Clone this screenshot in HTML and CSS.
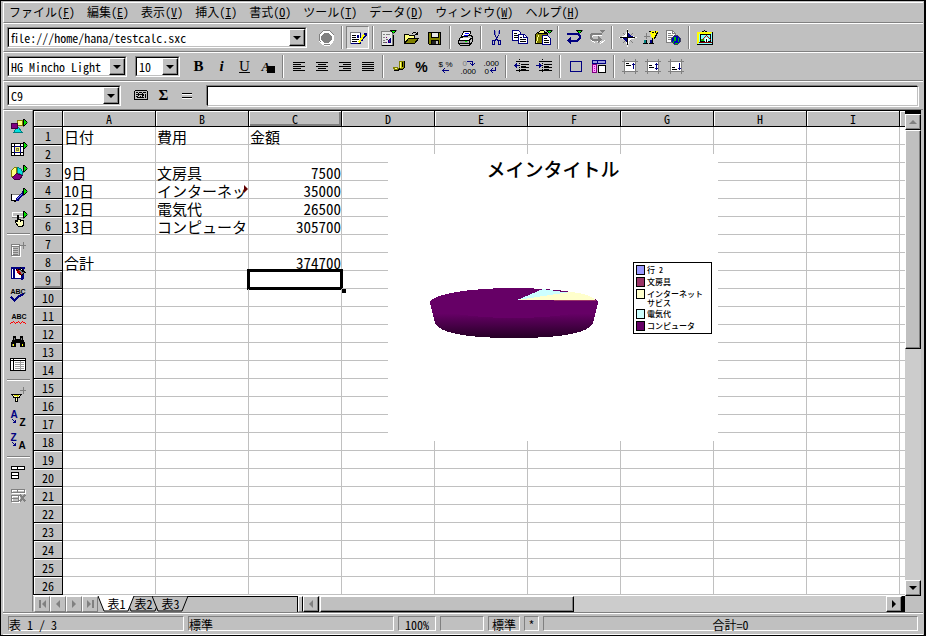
FILE: index.html
```html
<!DOCTYPE html>
<html lang="ja">
<head>
    <meta charset="UTF-8">
    <meta name="viewport" content="width=device-width, initial-scale=1.0">
    <title>testcalc.sxc</title>
    <link rel="stylesheet" href="styles.css">
</head>
<body>
    <svg class="defs" aria-hidden="true">
        <symbol id="flyout" viewBox="0 0 5 8"><path d="M0 0H1L5 4L1 8H0z" fill="#000" stroke="none"/><path d="M1 1L4 4L1 7z" fill="#0d0" stroke="none"/></symbol>
        <symbol id="dropdown" viewBox="0 0 7 4"><path d="M0 0H7V1L4 4H3L0 1z" fill="#000" stroke="none"/><path d="M1 1H6L4 3H3z" fill="#0e0" stroke="none"/></symbol>
    </svg>

    <div class="window">
        <nav class="menubar">
            <a href="#">ファイル(<u>F</u>)</a>
            <a href="#">編集(<u>E</u>)</a>
            <a href="#">表示(<u>V</u>)</a>
            <a href="#">挿入(<u>I</u>)</a>
            <a href="#">書式(<u>O</u>)</a>
            <a href="#">ツール(<u>T</u>)</a>
            <a href="#">データ(<u>D</u>)</a>
            <a href="#">ウィンドウ(<u>W</u>)</a>
            <a href="#">ヘルプ(<u>H</u>)</a>
        </nav>

        <!-- function bar -->
        <div class="toolbar">
            <div class="combo combo-url">
                <select aria-label="URL"><option>file:///home/hana/testcalc.sxc</option></select>
                <span class="combo-arrow"></span>
            </div>
            <div class="tools">
                <button class="tool" aria-label="Stop"><svg class="icon" viewBox="-.5 -.5 18 18"><path d="M5 1H11L15 5V11L11 15H5L1 11V5z" fill="#fff" stroke="#808080"/><path d="M15 6V11L11 16H6L1 12" stroke="#fff"/><path d="M6 4H10L13 7V10L10 13H6L3 10V7z" fill="#808080" stroke="#808080"/></svg></button>
                <span class="sep"></span>
                <button class="tool pressed" aria-label="Edit file"><svg class="icon" viewBox="-.5 -.5 18 18"><path d="M1 3H11V14H1z" fill="#fff" stroke="#000080"/><path d="M1 14V3H11" stroke="#808080"/><path d="M3 6H6M3 8H6M3 10H9M3 12H7"/><path d="M8 6H9V8H8z" fill="#000080" stroke="#000080"/><path d="M16 5L12 10" stroke="#000080" stroke-width="3"/><path d="M14 6L10 12" stroke="#ff0" stroke-width="2"/><path d="M9 14H10"/></svg></button>
                <span class="sep"></span>
                <button class="tool" aria-label="New"><svg class="icon" viewBox="-.5 -.5 18 18"><path d="M1 2H12V16H1z" fill="#e8e8e8" stroke="#808080"/><path d="M2 16H13V6"/><path d="M3 5H4M3 8H4M3 11H4M6 5H9" stroke="#808080"/><path d="M6 8H6M6 13H6" stroke="#800080"/><path d="M10 9V13H8V11z" fill="#800080" stroke="#000080"/><path d="M3 13H5M6 10H7" stroke="#606060"/><use href="#dropdown" x="9" y="0" width="7" height="4"/></svg></button>
                <button class="tool" aria-label="Open"><svg class="icon" viewBox="-.5 -.5 18 18"><path d="M1 14V5H5L6 6H11V9" fill="#ffff80"/><path d="M1 14L5 9H15L11 14z" fill="#808000"/><path d="M9 4L10 3H12L14 5M14 3V5H12"/></svg></button>
                <button class="tool" aria-label="Save"><svg class="icon" viewBox="-.5 -.5 18 18"><path d="M2 3H14V15H3L2 14z" fill="#808000"/><path d="M5 3H12V8H5z" fill="#e8e8e8"/><path d="M5 11H12V15H5z" fill="#202020"/><path d="M10 12H11V14H10z" fill="#c0c0c0" stroke="#c0c0c0"/></svg></button>
                <span class="sep"></span>
                <button class="tool" aria-label="Print"><svg class="icon" viewBox="-.5 -.5 18 18"><path d="M4 7L6 2H13L12 7z" fill="#fff"/><path d="M8 4H11M7 6H10" stroke="#00f"/><path d="M3 8L1 11V14L3 16H12L15 12V7L13 6z" fill="#c0c0c0"/><path d="M4 9H12L11 10H3z" fill="#fff" stroke="#fff"/><path d="M1 11H11L15 8M2 14H12M12 11V15"/><path d="M3 12H10M3 13H10" stroke="#a0a0a0"/><path d="M8 12H9" stroke="#0f0"/></svg></button>
                <span class="sep"></span>
                <button class="tool" aria-label="Cut"><svg class="icon" viewBox="-.5 -.5 18 18"><path d="M6 1V4L8 9M11 1V4L8 9" stroke="#000080"/><path d="M7 2V5M10 2V5" stroke="#8080c0"/><path d="M4 11H6V15H4zM10 11H12V15H10z" stroke="#000080"/><path d="M8 9L7 11M8 9L9 11" stroke="#000080"/></svg></button>
                <button class="tool" aria-label="Copy"><svg class="icon" viewBox="-.5 -.5 18 18"><path d="M1 1H7L9 3V11H1z" fill="#fff" stroke="#000080"/><path d="M3 4H5M3 6H7M3 8H7"/><path d="M7 5H13L16 8V14H7z" fill="#fff" stroke="#000080"/><path d="M12 5V8H16" stroke="#000080"/><path d="M9 8H10M9 10H14M9 12H14"/></svg></button>
                <button class="tool" aria-label="Paste"><svg class="icon" viewBox="-.5 -.5 18 18"><path d="M1 5L3 3H12L13 5V14H1z" fill="#808000"/><path d="M4 3L6 1H9L11 4H4z" fill="#ffff80"/><path d="M2 13L4 6" stroke="#ffff80"/><path d="M8 6H13L16 9V15H8z" fill="#fff" stroke="#000080"/><path d="M10 9H12M10 11H14M10 13H14"/><use href="#dropdown" x="11" y="0" width="7" height="4"/></svg></button>
                <span class="sep"></span>
                <button class="tool" aria-label="Undo"><svg class="icon" viewBox="-.5 -.5 18 18"><path d="M2 4H12L14 6V9L12 11H4" stroke="#000080" stroke-width="2"/><path d="M5 8L2 11L5 14z" fill="#000080" stroke="#000080"/><use href="#dropdown" x="10" y="0" width="7" height="4"/></svg></button>
                <button class="tool" aria-label="Redo" disabled><svg class="icon" viewBox="-.5 -.5 18 18"><path d="M13 6H5L3 8V11L6 13M9 12H12M12 14L16 11" stroke="#fff"/><path d="M12 4H4L2 6V8L4 10H9" stroke="#808080" stroke-width="2"/><path d="M10 7L13 10L10 13z" fill="#808080" stroke="#808080"/><path d="M10 0H17L14 4z" fill="#808080" stroke="none"/></svg></button>
                <span class="sep"></span>
                <button class="tool" aria-label="Navigator"><svg class="icon" viewBox="-.5 -.5 18 18"><path d="M4 4L6 6M13 4L11 6M4 13L6 11M13 13L11 11" stroke="#808080"/><path d="M8 1L10 6L16 8L10 10L8 16L6 10L1 8L6 6z" fill="#fff" stroke="#fff"/><path d="M8 1V15M1 8H15"/><path d="M9 4V7H13L10 6zM7 12V9H4L6 10z" fill="#000080" stroke="#000080"/></svg></button>
                <button class="tool" aria-label="Stylist"><svg class="icon" viewBox="-.5 -.5 18 18"><path d="M4 4V9M2 7H7" stroke="#808080"/><path d="M7 2H15L15 4L12 6V9H10L9 5z" fill="#ffff00" stroke="#ffff00"/><path d="M7 2H8M10 3H11M15 3L12 9M13 2V3M10 9V10"/><path d="M2 11H4V14H2z" fill="#008080" stroke="#008080"/><path d="M8 11H10V14H8z" fill="#000080" stroke="#000080"/><path d="M1 14H5M7 14H11M4 11V14M10 11V14"/></svg></button>
                <button class="tool" aria-label="Hyperlink"><svg class="icon" viewBox="-.5 -.5 18 18"><path d="M1 1H7L10 4V13H1z" fill="#fff" stroke="#808080"/><path d="M3 4H5M3 6H7M3 8H7M3 10H5M7 1V4H10" stroke="#808080"/><path d="M9 6H12L15 9V12L12 15H9L6 12V9z" fill="#0000c0" stroke="#404060"/><path d="M9 8H10V11H9zM13 9V12M10 14H12M8 12V13" fill="#00c000" stroke="#00c000"/></svg></button>
                <span class="sep"></span>
                <button class="tool" aria-label="Gallery"><svg class="icon" viewBox="-.5 -.5 18 18"><path d="M5 3L8 1L11 3"/><path d="M1 3H16V15H1z" fill="#80ffff" stroke="#808000"/><path d="M1 3H15M1 3V14M2 4H14M2 4V13" stroke="#ffff00"/><path d="M16 3V15H1M4 5H14V12H4z"/><path d="M3 13H15" stroke="#800000"/><path d="M5 10H7V11H5z" fill="#0c0" stroke="#0c0"/><path d="M9 9H11V12H9z" fill="#fff" stroke="#fff"/><path d="M6 10L10 6L14 10" stroke="#c00000"/><path d="M10 10V12"/></svg></button>
            </div>
        </div>

        <!-- object bar -->
        <div class="toolbar">
            <div class="combo combo-font">
                <select aria-label="Font"><option>HG Mincho Light</option></select>
                <span class="combo-arrow"></span>
            </div>
            <div class="combo combo-size">
                <select aria-label="Size"><option>10</option></select>
                <span class="combo-arrow"></span>
            </div>
            <div class="tools">
                <button class="tool glyph"><b>B</b></button>
                <button class="tool glyph"><i>i</i></button>
                <button class="tool glyph"><u>U</u></button>
                <button class="tool" aria-label="Font colour"><svg class="icon" viewBox="-.5 -.5 18 18"><text class="t-serif" x="2" y="12">A</text><path d="M8 8H15V14H8z" fill="#000"/></svg></button>
                <span class="sep"></span>
                <button class="tool" aria-label="Left"><svg class="icon" viewBox="-.5 -.5 18 18"><path d="M3 4H14M3 6H10M3 8H14M3 10H10M3 12H14"/></svg></button>
                <button class="tool" aria-label="Centre"><svg class="icon" viewBox="-.5 -.5 18 18"><path d="M3 4H14M5 6H12M3 8H14M5 10H12M3 12H14"/></svg></button>
                <button class="tool" aria-label="Right"><svg class="icon" viewBox="-.5 -.5 18 18"><path d="M3 4H14M7 6H14M3 8H14M7 10H14M3 12H14"/></svg></button>
                <button class="tool" aria-label="Justify"><svg class="icon" viewBox="-.5 -.5 18 18"><path d="M3 4H14M3 6H14M3 8H14M3 10H14M3 12H14"/></svg></button>
                <span class="sep"></span>
                <button class="tool" aria-label="Currency"><svg class="icon" viewBox="-.5 -.5 18 18"><path d="M9 3H13V10H9z" fill="#c0c000" stroke="#808000"/><path d="M14 3V9L12 11H9M12 4V8"/><path d="M10 4V9" stroke="#ffff80"/><path d="M3 9H7L8 11H4z" fill="#ffff80" stroke="#808000"/><path d="M4 12H8L9 10"/></svg></button>
                <button class="tool glyph-sans">%</button>
                <button class="tool" aria-label="Standard format"><svg class="icon" viewBox="-.5 -.5 18 18"><text class="t-small" x="2" y="8">$</text><text class="t-small" x="9" y="8">%</text><path d="M6 12H12M8 10L6 12L8 14" stroke="#000080"/></svg></button>
                <button class="tool" aria-label="Add decimal"><svg class="icon" viewBox="-.5 -.5 18 18"><text class="t-small t-gray" x="3" y="7">0</text><path d="M8 3H13V7M11 5L13 7L15 5" stroke="#000080"/><text class="t-small" x="1" y="15">.000</text></svg></button>
                <button class="tool" aria-label="Delete decimal"><svg class="icon" viewBox="-.5 -.5 18 18"><text class="t-small" x="1" y="7">.000</text><text class="t-small" x="2" y="15">0</text><path d="M13 9V12H8M10 10L8 12L10 14" stroke="#000080"/></svg></button>
                <span class="sep"></span>
                <button class="tool" aria-label="Decrease indent"><svg class="icon" viewBox="-.5 -.5 18 18"><path d="M3 3H15M8 6H15M8 9H15M8 8H12M3 12H15M8 11H12"/><path d="M6 1V15" stroke-dasharray="0 2"/><path d="M1 7H5M3 5V9M2 6V8" stroke="#000080"/></svg></button>
                <button class="tool" aria-label="Increase indent"><svg class="icon" viewBox="-.5 -.5 18 18"><path d="M3 3H15M8 6H15M8 9H15M8 8H12M3 12H15M8 11H12"/><path d="M6 1V15" stroke-dasharray="0 2"/><path d="M0 7H5M3 5V9M4 6V8" stroke="#000080"/></svg></button>
                <span class="sep"></span>
                <button class="tool" aria-label="Borders"><svg class="icon" viewBox="-.5 -.5 18 18"><path d="M3 3H14V13H3z" stroke="#000080"/></svg></button>
                <button class="tool" aria-label="Background"><svg class="icon" viewBox="-.5 -.5 18 18"><path d="M2 2H15V5H2z" fill="#a0a0e0" stroke="#000080"/><path d="M7 2V5" stroke="#000080"/><path d="M2 6H6V14H2z" fill="#ffa0ff" stroke="#800080"/><path d="M4 8V13" stroke="#c000c0" stroke-dasharray="0 2"/><path d="M8 7H15V14H8z" fill="#fff"/></svg></button>
                <span class="sep"></span>
                <button class="tool" aria-label="Align top"><svg class="icon" viewBox="-.5 -.5 18 18"><path d="M3 3H14V13H3z" fill="#fff" stroke="#808080"/><path d="M1 3H16M1 13H16M3 1V15M14 1V15" stroke="#808080"/><path d="M5 5H7M5 7H9"/><path d="M12 5V10M11 6H13" stroke="#000080"/></svg></button>
                <button class="tool" aria-label="Align centre vertically"><svg class="icon" viewBox="-.5 -.5 18 18"><path d="M3 3H14V13H3z" fill="#fff" stroke="#808080"/><path d="M1 3H16M1 13H16M3 1V15M14 1V15" stroke="#808080"/><path d="M5 7H7M5 9H9"/><path d="M12 5V11M11 6H13M11 10H13" stroke="#000080"/></svg></button>
                <button class="tool" aria-label="Align bottom"><svg class="icon" viewBox="-.5 -.5 18 18"><path d="M3 3H14V13H3z" fill="#fff" stroke="#808080"/><path d="M1 3H16M1 13H16M3 1V15M14 1V15" stroke="#808080"/><path d="M5 9H7M5 11H9"/><path d="M12 5V11M11 10H13" stroke="#000080"/></svg></button>
            </div>
        </div>

        <!-- formula bar -->
        <div class="toolbar">
            <div class="combo combo-name">
                <select aria-label="Cell"><option>C9</option></select>
                <span class="combo-arrow"></span>
            </div>
            <div class="tools">
                <button class="tool" aria-label="Function wizard"><svg class="icon" viewBox="-.5 -.5 18 18"><path d="M2 4L3 3H14L15 4V11L14 12H3L2 11z" fill="#c0c0c0"/><path d="M2 12H15M15 4V11M4 5H5M4 7H5M4 9H5M7 5H9M7 7H9M8 9V10M11 5H13M11 7V8M13 7V10M5 10H11M6 6V8M10 6V9"/></svg></button>
                <button class="tool glyph">Σ</button>
                <button class="tool" aria-label="Function"><svg class="icon" viewBox="-.5 -.5 18 18"><path d="M4 7H13M4 11H13" stroke="#fff"/><path d="M4 6H13M4 10H13"/></svg></button>
            </div>
            <input class="formula" type="text" aria-label="Formula">
        </div>

        <div class="workspace">
            <div class="sidebar">
                <button class="tool" aria-label="Insert"><svg class="icon" viewBox="-.5 -.5 18 18"><path d="M8 2H13V7H8z" fill="#ffff80" stroke="#808000"/><path d="M8 8L13 14H4z" fill="#00e0e0" stroke="#008080"/><path d="M2 5H8V10H2z" fill="#800080" stroke="#400040"/><use href="#flyout" x="13" y="0" width="5" height="8"/></svg></button>
                <button class="tool" aria-label="Insert cells"><svg class="icon" viewBox="-.5 -.5 18 18"><path d="M2 2H14V14H2z" fill="#fff"/><path d="M5 2V14M11 2V14M2 5H14M2 11H14"/><path d="M5 5H11V11H5z" fill="#ffff80" stroke="#000080"/><path d="M7 7H9V9H7z" fill="#c0c0a0" stroke="#808040"/><use href="#flyout" x="13" y="0" width="5" height="8"/></svg></button>
                <button class="tool" aria-label="Insert object"><svg class="icon" viewBox="-.5 -.5 18 18"><path d="M7 9V3H5L2 6V11L3 13z" fill="#ffff80" stroke="#808000"/><path d="M8 9V3L11 4L13 7V10z" fill="#00e0e0" stroke="#008080"/><path d="M7 9L13 11L10 15H5L3 13z" fill="#800080" stroke="#400040"/><use href="#flyout" x="13" y="0" width="5" height="8"/></svg></button>
                <button class="tool" aria-label="Draw"><svg class="icon" viewBox="-.5 -.5 18 18"><path d="M2 7H12L9 13H2z" fill="#fff" stroke="#808080"/><path d="M2 7V13H9"/><path d="M14 5L8 12" stroke="#000080" stroke-width="3"/><path d="M12 7L8 11" stroke="#8080ff"/><path d="M5 14H6"/><use href="#flyout" x="13" y="0" width="5" height="8"/></svg></button>
                <button class="tool" aria-label="Form"><svg class="icon" viewBox="-.5 -.5 18 18"><path d="M3 2H14V6H3z" fill="#c0c0c0" stroke="#fff"/><path d="M3 7H14" stroke="#808080"/><path d="M8 5H9V9L14 10V14L13 16H9L6 12V10L8 11z" fill="#ffffc0"/><path d="M11 9V11"/><use href="#flyout" x="13" y="0" width="5" height="8"/></svg></button>
                <span class="hsep"></span>
                <button class="tool" aria-label="AutoFormat" disabled><svg class="icon" viewBox="-.5 -.5 18 18"><path d="M3 4H11V15H3z" stroke="#fff"/><path d="M2 3H10V14H2zM2 5H10M4 7H8M4 9H8M4 11H8M4 13H8M14 1V7M11 4H16" stroke="#808080"/></svg></button>
                <button class="tool" aria-label="Themes"><svg class="icon" viewBox="-.5 -.5 18 18"><path d="M2 3H14V14H2z" fill="#fff" stroke="#000080"/><path d="M2 3H14M4 5V12M12 10V14" stroke="#000080" stroke-width="2"/><path d="M7 5H11L15 8L12 11z" fill="#808080"/><path d="M7 6L10 10M8 5L12 10" stroke="#c00000"/><path d="M11 3L16 8"/></svg></button>
                <button class="tool" aria-label="Spellcheck"><svg class="icon" viewBox="-.5 -.5 18 18"><text class="t-abc" x="1" y="6">ABC</text><path d="M2 10L5 13L9 9L13 7" stroke="#000080" stroke-width="2"/></svg></button>
                <button class="tool" aria-label="AutoSpellcheck"><svg class="icon" viewBox="-.5 -.5 18 18"><text class="t-abc" x="2" y="8">ABC</text><path d="M1 13L4 11L6 13L9 11L11 13L13 11L16 13" stroke="#f00"/></svg></button>
                <button class="tool" aria-label="Find"><svg class="icon" viewBox="-.5 -.5 18 18"><path d="M4 3H6V6H11V3H13V6L15 9V13H11V9H6V13H2V9L4 6z" fill="#000"/><path d="M5 5V6M12 5V6M3 11V12" stroke="#808080"/><path d="M4 11V12M13 11V12" stroke="#ffff00"/></svg></button>
                <button class="tool" aria-label="Data sources"><svg class="icon" viewBox="-.5 -.5 18 18"><path d="M1 2H16V14H1z" fill="#fff"/><path d="M1 4H16M4 2V14"/><path d="M6 6H14M6 8H14M6 10H14M6 12H14M11 5V13" stroke="#a0a0a0"/></svg></button>
                <span class="hsep"></span>
                <button class="tool" aria-label="AutoFilter"><svg class="icon" viewBox="-.5 -.5 18 18"><path d="M14 0V6M11 3H16" stroke="#808080"/><path d="M2 7H12L8 11V14H6V11z" fill="#ffffc0"/><path d="M5 8H9L7 10" stroke="#d0d000"/><path d="M4 10H10"/></svg></button>
                <button class="tool" aria-label="Sort ascending"><svg class="icon" viewBox="-.5 -.5 18 18"><text class="t-sort t-blue" x="1" y="7">A</text><path d="M3 9L6 12M6 10V12H4" stroke="#000080"/><text class="t-sort" x="10" y="15">Z</text></svg></button>
                <button class="tool" aria-label="Sort descending"><svg class="icon" viewBox="-.5 -.5 18 18"><text class="t-sort t-blue" x="1" y="7">Z</text><path d="M3 9L6 12M6 10V12H4" stroke="#000080"/><text class="t-sort" x="9" y="15">A</text></svg></button>
                <span class="hsep"></span>
                <button class="tool" aria-label="Group"><svg class="icon" viewBox="-.5 -.5 18 18"><path d="M2 2H15V5H2zM8 2V5M2 8H9V14H2zM2 11H9" fill="#fff"/></svg></button>
                <button class="tool" aria-label="Ungroup" disabled><svg class="icon" viewBox="-.5 -.5 18 18"><path d="M3 3H16V6H3zM3 9H10V15H3z" stroke="#fff"/><path d="M2 2H15V5H2zM8 2V5M2 8H9V14H2zM2 11H9" stroke="#808080"/><path d="M11 8L15 13M15 8L11 13" stroke="#808080" stroke-width="2"/></svg></button>
            </div>

            <div class="document">
                <div class="sheet-area">
                    <div class="sheet">
                        <table class="grid">
                            <thead><tr id="columns"></tr></thead>
                            <tbody id="rows"></tbody>
                        </table>

                        <figure class="chart">
                            <figcaption>メインタイトル</figcaption>
                            <div class="plot">
                                <svg class="pie" viewBox="0 0 170 52">
                                    <defs>
                                        <linearGradient id="side" x1="0" y1="0" x2="0" y2="1">
                                            <stop offset="0.3" stop-color="#660066"/>
                                            <stop offset="1" stop-color="#260026"/>
                                        </linearGradient>
                                    </defs>
                                    <path d="M0 16L5 36Q12 51 84 51Q156 51 163 36L168 16z" fill="url(#side)"/>
                                    <ellipse cx="84" cy="16" rx="84" ry="15" fill="#660066"/>
                                    <path d="M87 13L113 2L140 6z" fill="#ccffff"/>
                                    <path d="M87 13L140 5Q158 6 166 13z" fill="#ffffcc"/>
                                    <path d="M124 13H166" stroke="#993366"/>
                                </svg>
                                <ul class="legend">
                                    <li><span class="swatch row2"></span>行 2</li>
                                    <li><span class="swatch books"></span>文房具</li>
                                    <li class="two-lines"><span class="swatch net"></span><span>インターネット<br>サビス</span></li>
                                    <li><span class="swatch power"></span>電気代</li>
                                    <li><span class="swatch computer"></span>コンピュータ</li>
                                </ul>
                            </div>
                        </figure>
                    </div>
                    <div class="vscroll">
                        <span class="split"></span>
                        <button class="arrow up off" aria-label="Up"></button>
                        <span class="thumb"></span>
                        <button class="arrow down" aria-label="Down"></button>
                    </div>
                </div>

                <div class="tab-row">
                    <div class="tab-nav">
                        <button class="arrow left off bar" aria-label="First"></button>
                        <button class="arrow left off" aria-label="Previous"></button>
                        <button class="arrow right off" aria-label="Next"></button>
                        <button class="arrow right off bar" aria-label="Last"></button>
                    </div>
                    <div class="tabs">
                        <button class="tab active"><svg viewBox="0 0 37 16"><path d="M0 0L6 15H30L36 0"/></svg><span>表1</span></button>
                        <button class="tab"><svg viewBox="0 0 37 16"><path d="M0 0L6 15H30L36 0z"/></svg><span>表2</span></button>
                        <button class="tab"><svg viewBox="0 0 37 16"><path d="M0 0L6 15H30L36 0z"/></svg><span>表3</span></button>
                    </div>
                    <span class="splitter"></span>
                    <div class="hscroll">
                        <button class="arrow left off" aria-label="Left"></button>
                        <span class="thumb"></span>
                        <button class="arrow right" aria-label="Right"></button>
                        <span class="split"></span>
                    </div>
                </div>
            </div>
        </div>

        <footer class="statusbar">
            <span class="panel panel-sheet">表 1 / 3</span>
            <span class="panel panel-style">標準</span>
            <span class="panel panel-zoom">100%</span>
            <span class="panel panel-insert"></span>
            <span class="panel panel-mode">標準</span>
            <span class="panel panel-dirty">*</span>
            <span class="panel panel-sum">合計=0</span>
        </footer>
    </div>

    <script>
        const columns = ['A', 'B', 'C', 'D', 'E', 'F', 'G', 'H', 'I', ''];
        const cells = {
            A1: '日付', B1: '費用', C1: '金額',
            A3: '9日', B3: '文房具', C3: 7500,
            A4: '10日', B4: 'インターネッ', C4: 35000,
            A5: '12日', B5: '電気代', C5: 26500,
            A6: '13日', B6: 'コンピュータ', C6: 305700,
            A8: '合計', C8: 374700
        };
        const clipped = 'B4';
        const active = 'C9';

        const head = document.getElementById('columns');
        head.appendChild(document.createElement('th')).className = 'row-head';
        columns.forEach(name => {
            const th = head.appendChild(document.createElement('th'));
            th.textContent = name;
            th.className = name ? 'col' : 'rest';
            if (name === active[0]) th.classList.add('current');
        });

        const body = document.getElementById('rows');
        for (let r = 1; r <= 26; r++) {
            const tr = body.appendChild(document.createElement('tr'));
            const th = tr.appendChild(document.createElement('th'));
            th.textContent = r;
            th.className = 'row-head';
            if (r === Number(active.slice(1))) th.classList.add('current');
            columns.forEach(name => {
                const td = tr.appendChild(document.createElement('td'));
                const value = cells[name + r];
                if (value !== undefined) td.textContent = value;
                if (typeof value === 'number') td.className = 'number';
                if (name + r === clipped) td.className = 'clipped';
                if (name + r === active) td.className = 'selected';
            });
        }
    </script>
</body>
</html>
```
FILE: styles.css
```css
* {
    box-sizing: border-box;
}

body {
    margin: 0;
    background-color: #c0c0c0;
    color: #000;
    font-family: "Noto Sans CJK JP", "Liberation Sans", sans-serif;
    font-size: 12px;
    font-feature-settings: "hwid" 1;
}

button, select, input {
    font: inherit;
    font-feature-settings: inherit;
    color: inherit;
    margin: 0;
    padding: 0;
    border: 0;
    border-radius: 0;
    background: none;
    outline: none;
}

.defs {
    display: none;
}

.window {
    display: flex;
    flex-direction: column;
    height: 100vh;
    min-height: 500px;
    border: 1px solid #000;
    border-right-width: 2px;
    padding: 1px 1px 0 2px;
    overflow: hidden;
}

/* menu */
.menubar {
    display: flex;
    gap: 12px;
    height: 21px;
    padding-left: 5px;
    line-height: 18px;
    border-top: 1px solid #fff;
    border-left: 1px solid #fff;
    border-bottom: 1px solid #808080;
    flex-shrink: 0;
}

.menubar a {
    color: #000;
    text-decoration: none;
    white-space: nowrap;
}

.menubar u {
    text-underline-offset: 1px;
}

/* toolbars */
.toolbar {
    display: flex;
    align-items: center;
    gap: 8px;
    height: 29px;
    padding: 0 5px 0 3px;
    border-top: 1px solid #fff;
    border-left: 1px solid #fff;
    border-bottom: 1px solid #808080;
    flex-shrink: 0;
}

.tools {
    display: flex;
    align-items: center;
}

.tool {
    display: flex;
    align-items: center;
    justify-content: center;
    width: 23px;
    height: 23px;
    flex-shrink: 0;
}

.tool.pressed {
    background-color: #d4d4d4;
    border: 1px solid;
    border-color: #808080 #fff #fff #808080;
}

.icon {
    display: block;
    width: 18px;
    height: 18px;
    flex-shrink: 0;
    fill: none;
    stroke: #000;
    stroke-linecap: square;
    shape-rendering: crispEdges;
    overflow: visible;
}

.icon text {
    fill: #000;
    stroke: none;
}

.t-serif {
    font: italic bold 13px "Liberation Serif", serif;
}

.t-small {
    font: 8px "Liberation Sans", sans-serif;
}

.t-abc {
    font: bold 7px "Liberation Sans", sans-serif;
}

.t-sort {
    font: bold 10px "Liberation Sans", sans-serif;
}

.icon .t-gray {
    fill: #808080;
}

.icon .t-blue {
    fill: #000080;
}

.glyph {
    font: bold 15px "Liberation Serif", serif;
}

.glyph u {
    font-weight: normal;
}

.glyph-sans {
    font: bold 14px "Liberation Sans", sans-serif;
}

.sep {
    width: 2px;
    height: 23px;
    margin: 0 3px;
    border-left: 1px solid #808080;
    border-right: 1px solid #fff;
}

.hsep {
    width: 23px;
    height: 2px;
    margin: 3px 0;
    border-top: 1px solid #808080;
    border-bottom: 1px solid #fff;
    flex-shrink: 0;
}

.combo {
    position: relative;
    height: 21px;
    border: 1px solid;
    border-color: #808080 #fff #fff #808080;
    background-color: #fff;
}

.combo select {
    display: block;
    width: 100%;
    height: 19px;
    padding: 0 18px 0 2px;
    appearance: none;
    border: 1px solid;
    border-color: #000 #c0c0c0 #c0c0c0 #000;
}

.combo-url {
    width: 300px;
}

.combo-font {
    width: 120px;
}

.combo-size {
    width: 45px;
    margin-right: -1px;
}

.combo-name {
    width: 114px;
}

.combo-arrow {
    position: absolute;
    top: 1px;
    right: 1px;
    width: 16px;
    height: 17px;
    background-color: #c0c0c0;
    border: 1px solid;
    border-color: #fff #000 #000 #fff;
    box-shadow: inset -1px -1px #808080;
    pointer-events: none;
}

.combo-arrow::before {
    content: "";
    position: absolute;
    left: 3px;
    top: 6px;
    border: 4px solid transparent;
    border-top-color: #000;
    border-bottom: 0;
}

.formula {
    flex: 1;
    min-width: 0;
    height: 20px;
    margin-left: 1px;
    padding: 0 3px;
    background-color: #fff;
    border: 1px solid;
    border-color: #000 #c0c0c0 #c0c0c0 #000;
    box-shadow: 1px 1px #fff, -1px -1px #808080;
}

/* workspace */
.workspace {
    display: flex;
    flex: 1;
    min-height: 0;
    padding-right: 2px;
    border-bottom: 1px solid #808080;
}

.sidebar {
    display: flex;
    flex-direction: column;
    align-items: center;
    width: 30px;
    padding-top: 4px;
    border: 1px solid;
    border-color: #fff #808080 transparent #fff;
    flex-shrink: 0;
}

.document {
    display: flex;
    flex-direction: column;
    flex: 1;
    min-width: 0;
}

.sheet-area {
    display: flex;
    flex: 1;
    min-height: 0;
}

.sheet {
    position: relative;
    flex: 1;
    min-width: 0;
    overflow: hidden;
    background-color: #fff;
}

.grid {
    width: 100%;
    table-layout: fixed;
    border-collapse: separate;
    border-spacing: 0;
}

.grid th {
    height: 18px;
    padding: 0;
    font-weight: normal;
    line-height: 15px;
    background-color: #c0c0c0;
    border-right: 1px solid #000;
    border-bottom: 1px solid #000;
    box-shadow: inset 1px 1px #fff;
}

.grid thead th {
    height: 17px;
    border-top: 1px solid #000;
}

.grid .col {
    width: 93px;
}

.grid .row-head {
    width: 30px;
    border-left: 1px solid #000;
}

.grid .rest {
    border-right: 0;
}

.grid .current {
    box-shadow: inset 1px 1px #fff, inset -2px -2px #808080;
}

.grid td {
    position: relative;
    height: 18px;
    padding: 2px 0 0 1px;
    font-size: 15px;
    line-height: 15px;
    white-space: nowrap;
    border-right: 1px solid #c0c0c0;
    border-bottom: 1px solid #c0c0c0;
}

.grid td:last-child {
    border-right: 0;
}

.grid .number {
    text-align: right;
}

.grid .clipped::after {
    content: "";
    position: absolute;
    right: 0;
    top: 4px;
    border: 4px solid transparent;
    border-left-color: #600000;
    border-right: 0;
}

.grid .selected::before {
    content: "";
    position: absolute;
    inset: -2px;
    border: 3px solid #000;
}

.grid .selected::after {
    content: "";
    position: absolute;
    right: -5px;
    bottom: -5px;
    width: 5px;
    height: 5px;
    background-color: #000;
}

/* chart floating over the cells */
.chart {
    position: absolute;
    left: 355px;
    top: 44px;
    width: 330px;
    height: 287px;
    margin: 0;
    background-color: #fff;
}

.chart figcaption {
    padding-top: 1px;
    font-size: 19px;
    font-weight: 500;
    line-height: 28px;
    text-align: center;
}

.plot {
    display: flex;
    align-items: flex-start;
    justify-content: space-between;
    padding: 79px 6px 0 42px;
}

.pie {
    width: 170px;
    height: 52px;
    margin-top: 25px;
    shape-rendering: crispEdges;
}

.legend {
    display: flex;
    flex-direction: column;
    gap: 2px;
    width: 79px;
    height: 72px;
    margin: 0;
    padding: 2px;
    list-style: none;
    font-size: 8px;
    font-weight: 500;
    line-height: 10px;
    white-space: nowrap;
    border: 1px solid #000;
}

.legend li {
    display: flex;
    gap: 2px;
    height: 10px;
}

.legend .two-lines {
    height: 19px;
    line-height: 9px;
}

.swatch {
    width: 9px;
    height: 10px;
    border: 1px solid #000;
}

.row2 {
    background-color: #9999ff;
}

.books {
    background-color: #993366;
}

.net {
    background-color: #ffffcc;
}

.power {
    background-color: #ccffff;
}

.computer {
    background-color: #660066;
}

/* scrollbars */
.arrow {
    display: flex;
    align-items: center;
    justify-content: center;
    width: 16px;
    height: 16px;
    background-color: #c0c0c0;
    border: 1px solid;
    border-color: #fff #000 #000 #fff;
    box-shadow: inset -1px -1px #808080;
    flex-shrink: 0;
}

.arrow::before {
    content: "";
    border: 4px solid transparent;
}

.arrow.up::before {
    border-top: 0;
    border-bottom-color: #000;
}

.arrow.down::before {
    border-bottom: 0;
    border-top-color: #000;
}

.arrow.left::before {
    border-left: 0;
    border-right-color: #000;
}

.arrow.right::before {
    border-right: 0;
    border-left-color: #000;
}

.arrow.off.up::before {
    border-bottom-color: #808080;
}

.arrow.off.left::before {
    border-right-color: #808080;
}

.arrow.off.right::before {
    border-left-color: #808080;
}

.arrow.bar::after {
    content: "";
    width: 2px;
    height: 8px;
    background-color: #808080;
}

.arrow.left.bar::after {
    order: -1;
    margin-right: 1px;
}

.arrow.right.bar::after {
    margin-left: 1px;
}

.thumb {
    background-color: #c0c0c0;
    border: 1px solid;
    border-color: #fff #000 #000 #fff;
    box-shadow: inset -1px -1px #808080;
}

.vscroll {
    display: flex;
    flex-direction: column;
    width: 16px;
    background-color: #ccc;
}

.vscroll .split {
    height: 4px;
    background-color: #000;
}

.vscroll .thumb {
    height: 45%;
    margin-bottom: auto;
}

.tab-row {
    display: flex;
    height: 16px;
    padding-right: 16px;
    flex-shrink: 0;
}

.tab-nav {
    display: flex;
    padding-left: 1px;
}

.tab-nav .arrow {
    border-color: #fff #808080 #808080 #fff;
    box-shadow: none;
}

.tabs {
    display: flex;
    width: 200px;
    border-top: 1px solid #000;
    border-right: 1px solid #000;
}

.tab {
    position: relative;
    width: 37px;
    height: 16px;
    margin-top: -1px;
    margin-left: -10px;
    line-height: 16px;
}

.tab.active {
    z-index: 1;
    margin-left: 0;
}

.tab svg {
    position: absolute;
    inset: 0;
    width: 37px;
    height: 16px;
    fill: #c0c0c0;
    stroke: #000;
}

.tab.active svg {
    fill: #fff;
}

.tab span {
    position: relative;
}

.splitter {
    width: 5px;
    border: 1px solid;
    border-color: #fff #000 #808080 #fff;
}

.hscroll {
    display: flex;
    flex: 1;
    background-color: #ccc;
}

.hscroll .thumb {
    width: 254px;
    margin-left: 1px;
    margin-right: auto;
}

.hscroll .split {
    width: 3px;
    background-color: #000;
}

/* status bar */
.statusbar {
    display: flex;
    gap: 4px;
    height: 22px;
    padding: 2px 5px 3px;
    border-top: 1px solid #fff;
    border-bottom: 1px solid #fff;
    flex-shrink: 0;
}

.panel {
    line-height: 15px;
    border: 1px solid;
    border-color: #808080 #fff #fff #808080;
    text-align: center;
    white-space: nowrap;
}

.panel-sheet {
    width: 176px;
    text-align: left;
}

.panel-style {
    width: 206px;
    text-align: left;
}

.panel-zoom {
    width: 38px;
}

.panel-insert {
    width: 44px;
}

.panel-mode {
    width: 32px;
}

.panel-dirty {
    width: 15px;
}

.panel-sum {
    flex: 1;
}
```
